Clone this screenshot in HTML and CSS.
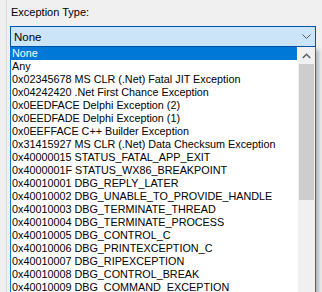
FILE: index.html
```html
<!DOCTYPE html>
<html>
<head>
<meta charset="utf-8">
<link rel="stylesheet" href="styles.css">
</head>
<body>
<div class="panel">
  <div class="label">Exception Type:</div>
  <div class="combo">
    <span class="combo-text">None</span>
    <svg class="chev" width="9" height="6" viewBox="0 0 9 6"><path d="M0.5 0.5 L4.5 4.5 L8.5 0.5" fill="none" stroke="#555" stroke-width="1"/></svg>
  </div>
  <div class="dropdown">
    <div class="items">
      <div class="item sel">None</div>
      <div class="item">Any</div>
      <div class="item">0x02345678 MS CLR (.Net) Fatal JIT Exception</div>
      <div class="item">0x04242420 .Net First Chance Exception</div>
      <div class="item">0x0EEDFACE Delphi Exception (2)</div>
      <div class="item">0x0EEDFADE Delphi Exception (1)</div>
      <div class="item">0x0EEFFACE C++ Builder Exception</div>
      <div class="item">0x31415927 MS CLR (.Net) Data Checksum Exception</div>
      <div class="item">0x40000015 STATUS_FATAL_APP_EXIT</div>
      <div class="item">0x4000001F STATUS_WX86_BREAKPOINT</div>
      <div class="item">0x40010001 DBG_REPLY_LATER</div>
      <div class="item">0x40010002 DBG_UNABLE_TO_PROVIDE_HANDLE</div>
      <div class="item">0x40010003 DBG_TERMINATE_THREAD</div>
      <div class="item">0x40010004 DBG_TERMINATE_PROCESS</div>
      <div class="item">0x40010005 DBG_CONTROL_C</div>
      <div class="item">0x40010006 DBG_PRINTEXCEPTION_C</div>
      <div class="item">0x40010007 DBG_RIPEXCEPTION</div>
      <div class="item">0x40010008 DBG_CONTROL_BREAK</div>
      <div class="item">0x40010009 DBG_COMMAND_EXCEPTION</div>
    </div>
    <div class="rail"><svg class="rail-arrow" width="9" height="6" viewBox="0 0 9 6"><path d="M0.8 5 L4.5 1.3 L8.2 5" fill="none" stroke="#606060" stroke-width="1.6"/></svg></div>
  </div>
</div>
</body>
</html>
```
FILE: styles.css
```css
html, body {
  margin: 0;
  padding: 0;
  background: #f0f0f0;
  overflow: hidden;
  width: 322px;
  height: 292px;
}
.panel {
  width: 306px;
  height: 292px;
  border-left: 1px solid #dadada;
  margin-left: 6px;
  padding-left: 3px;
}
.label {
  font-family: "Liberation Sans", sans-serif;
  font-size: 11px;
  color: #000;
  height: 26px;
  line-height: 24px;
  padding-left: 1px;
}
.combo {
  box-sizing: border-box;
  height: 21px;
  width: 306px;
  border: 1px solid #0054a6;
  background: #cce4f7;
  display: flex;
  align-items: center;
  justify-content: space-between;
  padding: 0 4px 0 3px;
}
.combo-text {
  font-family: "Liberation Sans", sans-serif;
  font-size: 11.5px;
  color: #000;
}
.chev {
  display: block;
}
.dropdown {
  box-sizing: border-box;
  width: 306px;
  height: 250px;
  border-left: 1px solid #0078d7;
  border-right: 1px solid #0078d7;
  box-shadow: 3px 3px 4px rgba(0,0,0,0.25);
  display: flex;
  background:
    linear-gradient(#cdcdcd, #cdcdcd) right 1px top 17px / 15px 136px no-repeat,
    linear-gradient(#f0f0f0, #f0f0f0) right top / 17px 100% no-repeat,
    #ffffff;
}
.items {
  width: 286px;
  flex: 0 0 286px;
  overflow: hidden;
  font-family: "Liberation Sans", sans-serif;
  font-size: 10.8px;
  color: #000;
}
.item {
  height: 13px;
  line-height: 13px;
  padding-left: 1px;
  white-space: nowrap;
  overflow: hidden;
}
.item.sel {
  background: #0078d7;
  color: #fff;
}
.rail {
  margin-left: auto;
  flex: 0 0 17px;
  height: 17px;
  display: flex;
  align-items: center;
  justify-content: center;
}
.rail-arrow {
  display: block;
}
```
